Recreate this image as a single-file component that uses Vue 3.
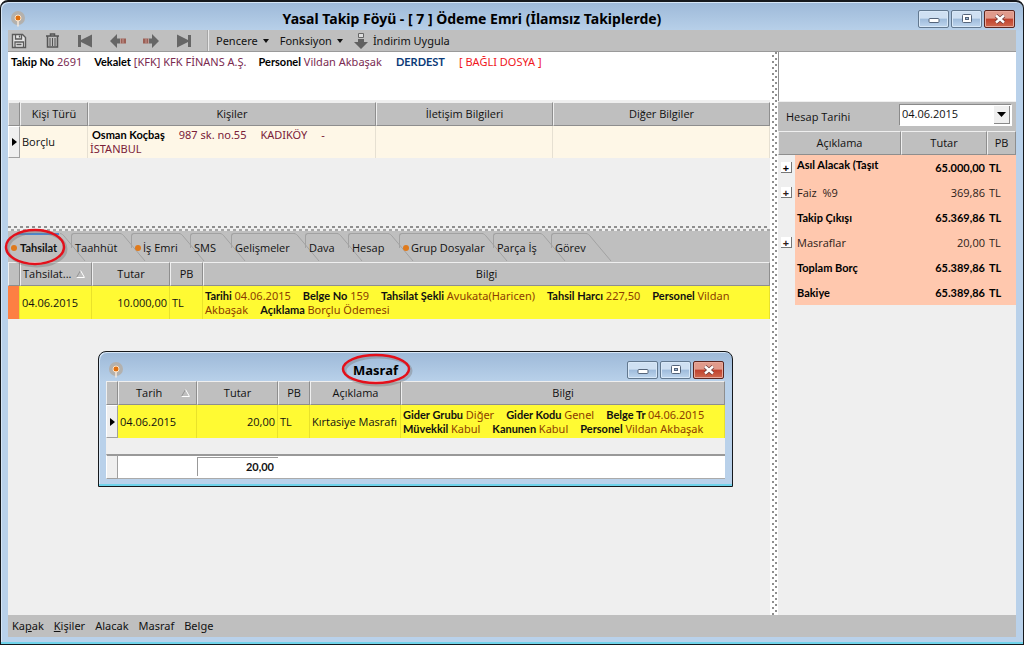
<script setup>
import { ref } from 'vue'

const date = ref('04.06.2015')
const activeTab = ref('Tahsilat')

const tabs = [
  { name: 'Tahsilat', dot: true, size: 'w1' },
  { name: 'Taahhüt', dot: false, size: 'w2' },
  { name: 'İş Emri', dot: true, size: 'w3' },
  { name: 'SMS', dot: false, size: 'w4' },
  { name: 'Gelişmeler', dot: false, size: 'w5' },
  { name: 'Dava', dot: false, size: 'w6' },
  { name: 'Hesap', dot: false, size: 'w7' },
  { name: 'Grup Dosyalar', dot: true, size: 'w8' },
  { name: 'Parça İş', dot: false, size: 'w9' },
  { name: 'Görev', dot: false, size: 'w10' },
]

const caseInfo = [
  ['Takip No', '2691'],
  ['Vekalet', '[KFK] KFK FİNANS A.Ş.'],
  ['Personel', 'Vildan Akbaşak'],
]

const paymentLines = [
  [['Tarihi', '04.06.2015'], ['Belge No', '159'], ['Tahsilat Şekli', 'Avukata(Haricen)'], ['Tahsil Harcı', '227,50'], ['Personel', 'Vildan']],
  [['', 'Akbaşak'], ['Açıklama', 'Borçlu Ödemesi']],
]

const expenseLines = [
  [['Gider Grubu', 'Diğer'], ['Gider Kodu', 'Genel'], ['Belge Tr', '04.06.2015']],
  [['Müvekkil', 'Kabul'], ['Kanunen', 'Kabul'], ['Personel', 'Vildan Akbaşak']],
]

const summary = [
  { label: 'Asıl Alacak (Taşıt', amount: '65.000,00', strong: true, expandable: true },
  { label: 'Faiz  %9', amount: '369,86', strong: false, expandable: true },
  { label: 'Takip Çıkışı', amount: '65.369,86', strong: true, expandable: false },
  { label: 'Masraflar', amount: '20,00', strong: false, expandable: true },
  { label: 'Toplam Borç', amount: '65.389,86', strong: true, expandable: false },
  { label: 'Bakiye', amount: '65.389,86', strong: true, expandable: false },
]
</script>

<template>
  <div class="window main-window">
    <header class="titlebar">
      <svg class="app-icon" width="16" height="16" viewBox="0 0 16 16">
        <circle cx="8" cy="7" r="7" fill="#b3b1ae" />
        <circle cx="8" cy="7" r="3" fill="#e0700f" stroke="#fbe3c8" />
        <path d="M8 9.500v6" stroke="#f7e9da" stroke-width="1.500" />
      </svg>
      <h1 class="title main-title">Yasal Takip Föyü - [ 7 ] Ödeme Emri (İlamsız Takiplerde)</h1>
      <div class="controls">
        <button class="ctl" aria-label="Simge durumuna küçült"><svg width="12" height="12" viewBox="0 0 12 12"><rect x="1" y="5.500" width="10" height="4" rx="1" fill="#fff" stroke="#54647a" /></svg></button>
        <button class="ctl" aria-label="Ekranı kapla"><svg width="12" height="12" viewBox="0 0 12 12"><rect x="1.500" y="1.500" width="9" height="8" rx="1" fill="#fff" stroke="#54647a" /><rect x="4.500" y="4.500" width="3" height="2" fill="#9fb8d6" stroke="#54647a" /></svg></button>
        <button class="ctl close" aria-label="Kapat"><svg width="12" height="12" viewBox="0 0 12 12"><path d="M2 2.500l8 7M10 2.500l-8 7" stroke="#6a3a3a" stroke-width="4" /><path d="M2 2.500l8 7M10 2.500l-8 7" stroke="#fff" stroke-width="2.400" /></svg></button>
      </div>
    </header>

    <div class="client">
      <nav class="toolbar">
        <div class="icons">
          <button aria-label="Kaydet"><svg width="17" height="16" viewBox="0 0 17 16"><path d="M1.500 1.500h10l3 3v10h-13z" fill="#e4e4e4" stroke="#5a5a5a" stroke-width="1.400" /><path d="M4.500 1.500v4.500h6v-4.500M8.500 2.500v2M4 14.500v-5.500h8.500v5.500M5.500 11.500h5" fill="none" stroke="#5a5a5a" stroke-width="1.300" /></svg></button>
          <button aria-label="Sil"><svg width="17" height="16" viewBox="0 0 17 16"><path d="M2 3h13M6.500 2.500v-1.500h4V2.500M3.500 3.500v10.500h10V3.500" fill="none" stroke="#555" stroke-width="1.500" /><path d="M6 5v8M8.500 5v8M11 5v8" stroke="#555" /></svg></button>
          <button aria-label="İlk"><svg width="17" height="16" viewBox="0 0 17 16"><path d="M1 2h3v5l11-5.500v13L4 9v5H1z" fill="#666" /></svg></button>
          <button aria-label="Önceki"><svg width="17" height="16" viewBox="0 0 17 16"><path d="M0 8l7-7V5.500h3v5H7V15z" fill="#666" /><path d="M10.500 5.500h5.500v5h-5.500z" fill="#9c5f55" /><path d="M10.500 5.500v5M13 5.500v5" stroke="#bd9a94" /></svg></button>
          <button aria-label="Sonraki"><svg width="17" height="16" viewBox="0 0 17 16"><path d="M16 8L9 1V5.500H6v5h3V15z" fill="#666" /><path d="M0 5.500h5.500v5H0z" fill="#9c5f55" /><path d="M3 5.500v5M5.500 5.500v5" stroke="#bd9a94" /></svg></button>
          <button aria-label="Son"><svg width="17" height="16" viewBox="0 0 17 16"><path d="M15 2h-3v5L1 1.500v13L12 9v5h3z" fill="#666" /></svg></button>
        </div>
        <div class="commands">
          <button>Pencere<i class="caret"></i></button>
          <button>Fonksiyon<i class="caret"></i></button>
          <button class="discount"><svg width="14" height="16" viewBox="0 0 14 16"><path d="M4.500 .5h5v4h-5z" fill="#ddd" stroke="#666" /><path d="M4 6h6v3h4l-7 7-7-7h4z" fill="#606060" /></svg>İndirim Uygula</button>
        </div>
      </nav>

      <main class="body">
        <section class="left">
          <div class="info">
            <span v-for="[k, v] in caseInfo" :key="k"><b>{{ k }}</b> {{ v }}</span>
            <b class="status">DERDEST</b>
            <span class="linked">[ BAĞLI DOSYA ]</span>
          </div>

          <div class="people">
            <table>
              <colgroup><col class="c12"><col class="c68"><col class="c288"><col class="c177"><col></colgroup>
              <thead><tr><th></th><th>Kişi Türü</th><th>Kişiler</th><th>İletişim Bilgileri</th><th>Diğer Bilgiler</th></tr></thead>
              <tbody>
                <tr class="cream">
                  <td class="marker"><i class="pointer"></i></td>
                  <td>Borçlu</td>
                  <td class="address">
                    <div class="line first"><b>Osman Koçbaş</b><span>987 sk. no.55</span><span>KADIKÖY</span><span>-</span></div>
                    <div class="line">İSTANBUL</div>
                  </td>
                  <td></td>
                  <td></td>
                </tr>
              </tbody>
            </table>
          </div>

          <div class="hsplit"></div>

          <div class="tabs" role="tablist">
            <button v-for="t in tabs" :key="t.name" role="tab" class="tab" :class="[t.size, { active: activeTab === t.name }]" :aria-selected="activeTab === t.name" @click="activeTab = t.name">
              <i v-if="t.dot" class="dot"></i>{{ t.name }}
              <svg class="slant" width="26" height="28" viewBox="0 0 26 28"><path d="M0 .5C2 .5 3 2 4 3L25 28" fill="none" stroke="#a2a2a2" /></svg>
            </button>
          </div>

          <div class="payments">
            <table>
              <colgroup><col class="c12"><col class="c72"><col class="c78"><col class="c33"><col></colgroup>
              <thead><tr><th></th><th class="sorted"><div>Tahsilat...<svg width="9" height="8" viewBox="0 0 9 8"><path d="M4.500 .5L.5 7.500h8" fill="none" stroke="#929292" /><path d="M4.500 .5l4 7h-8" fill="none" stroke="#fff" /></svg></div></th><th>Tutar</th><th>PB</th><th>Bilgi</th></tr></thead>
              <tbody>
                <tr class="yellow">
                  <td class="orange"></td>
                  <td>04.06.2015</td>
                  <td class="num">10.000,00</td>
                  <td>TL</td>
                  <td class="details">
                    <div v-for="(line, i) in paymentLines" :key="i" class="line"><span v-for="[k, v] in line" :key="k"><b v-if="k">{{ k }}&nbsp;</b>{{ v }}</span></div>
                  </td>
                </tr>
              </tbody>
            </table>
          </div>
        </section>

        <div class="vsplit"></div>

        <aside class="right">
          <div class="blank"></div>
          <div class="date-row">
            <label for="calc-date">Hesap Tarihi</label>
            <div class="combo">
              <select id="calc-date" v-model="date"><option>04.06.2015</option></select>
              <span class="drop"><svg width="9" height="5" viewBox="0 0 9 5"><path d="M0 0h9L4.500 5z" fill="#000" /></svg></span>
            </div>
          </div>
          <table class="summary">
            <colgroup><col class="c17"><col><col class="c86"><col class="c29"></colgroup>
            <thead><tr><th colspan="2">Açıklama</th><th>Tutar</th><th>PB</th></tr></thead>
            <tbody>
              <tr v-for="r in summary" :key="r.label" :class="{ strong: r.strong, group: r.strong && r.expandable }">
                <td class="expander"><button v-if="r.expandable" :aria-label="r.label">+</button></td>
                <td class="label">{{ r.label }}</td>
                <td class="num">{{ r.amount }}</td>
                <td>TL</td>
              </tr>
            </tbody>
          </table>
        </aside>
      </main>

      <footer class="bottom">
        <button>Ka<u>p</u>ak</button><button><u>K</u>işiler</button><button>Alacak</button><button>Masraf</button><button>Belge</button>
      </footer>
    </div>

    <svg class="ring ring-tab" width="66" height="42" viewBox="0 0 66 42"><ellipse cx="34" cy="22" rx="29" ry="17" fill="none" stroke="#777" stroke-opacity=".4" stroke-width="3" /><ellipse cx="32" cy="20" rx="29" ry="17" fill="none" stroke="#e3101b" stroke-width="2.500" /></svg>

    <div class="window dialog" role="dialog" aria-labelledby="dlg-title">
      <header class="titlebar">
        <svg class="app-icon" width="16" height="16" viewBox="0 0 16 16">
          <circle cx="8" cy="7" r="7" fill="#b3b1ae" />
          <circle cx="8" cy="7" r="3" fill="#e0700f" stroke="#fbe3c8" />
          <path d="M8 9.500v6" stroke="#f7e9da" stroke-width="1.500" />
        </svg>
        <h2 id="dlg-title" class="title">Masraf<svg class="ring ring-title" width="74" height="36" viewBox="0 0 74 36"><ellipse cx="38" cy="19" rx="33" ry="14" fill="none" stroke="#777" stroke-opacity=".4" stroke-width="3" /><ellipse cx="36" cy="17" rx="33" ry="14" fill="none" stroke="#e3101b" stroke-width="2.500" /></svg></h2>
        <div class="controls">
          <button class="ctl" aria-label="Simge durumuna küçült"><svg width="12" height="12" viewBox="0 0 12 12"><rect x="1" y="5.500" width="10" height="4" rx="1" fill="#fff" stroke="#54647a" /></svg></button>
          <button class="ctl" aria-label="Ekranı kapla"><svg width="12" height="12" viewBox="0 0 12 12"><rect x="1.500" y="1.500" width="9" height="8" rx="1" fill="#fff" stroke="#54647a" /><rect x="4.500" y="4.500" width="3" height="2" fill="#9fb8d6" stroke="#54647a" /></svg></button>
          <button class="ctl close" aria-label="Kapat"><svg width="12" height="12" viewBox="0 0 12 12"><path d="M2 2.500l8 7M10 2.500l-8 7" stroke="#6a3a3a" stroke-width="4" /><path d="M2 2.500l8 7M10 2.500l-8 7" stroke="#fff" stroke-width="2.400" /></svg></button>
        </div>
      </header>
      <table>
        <colgroup><col class="c12"><col class="c79"><col class="c81"><col class="c32"><col class="c91"><col></colgroup>
        <thead><tr><th></th><th class="sorted wide"><div>Tarih<svg width="9" height="8" viewBox="0 0 9 8"><path d="M4.500 .5L.5 7.500h8" fill="none" stroke="#929292" /><path d="M4.500 .5l4 7h-8" fill="none" stroke="#fff" /></svg></div></th><th>Tutar</th><th>PB</th><th>Açıklama</th><th>Bilgi</th></tr></thead>
        <tbody>
          <tr class="yellow">
            <td class="marker"><i class="pointer"></i></td>
            <td>04.06.2015</td>
            <td class="num">20,00</td>
            <td>TL</td>
            <td>Kırtasiye Masrafı</td>
            <td class="details">
              <div v-for="(line, i) in expenseLines" :key="i" class="line"><span v-for="[k, v] in line" :key="k"><b>{{ k }}&nbsp;</b>{{ v }}</span></div>
            </td>
          </tr>
          <tr class="spacer"><td colspan="6"></td></tr>
        </tbody>
        <tfoot><tr><td class="marker"></td><td></td><td class="total"><b>20,00</b></td><td></td><td></td><td></td></tr></tfoot>
      </table>
    </div>
  </div>
</template>

<style>
body { margin: 0; background: #fff; }
</style>

<style scoped>
* { box-sizing: border-box; }
button, select { font: inherit; color: inherit; margin: 0; padding: 0; border: 0; background: none; }
b, .strong td { font-family: Lato, "Open Sans", sans-serif; font-weight: 700; }

.window {
  display: flex;
  flex-direction: column;
  border: 1px solid #15181c;
  border-radius: 8px 8px 0 0;
  background: linear-gradient(#9db9d8, #b9d1ea 30px, #b9d1ea);
  box-shadow: inset 0 -2px 0 #6fd3ea, inset 1px 1px 0 #d6e6f6;
  font: 11px/14px "Open Sans", "Noto Sans", sans-serif;
  color: #111;
}
.main-window { position: relative; height: 100vh; min-height: 560px; padding: 0 7px 7px; border-width: 2px 1px 1px; }
.titlebar { display: flex; align-items: center; flex: none; height: 28px; padding-top: 5px; }
.app-icon { margin-left: 2px; }
.title { position: relative; flex: 1; margin: 0; text-align: center; font: 700 13px/16px "Noto Sans", "Open Sans", sans-serif; color: #000; }
.main-title { font-size: 14px; }
.controls { display: flex; gap: 2px; padding-right: 1px; }
.ctl { display: grid; place-items: center; width: 31px; height: 18px; border: 1px solid #62788f; border-radius: 2px; background: linear-gradient(#cfe0f2 45%, #9ebbdb 50%, #bfd6ee); box-shadow: inset 0 0 0 1px #d8e8f8; }
.ctl.close { background: linear-gradient(#e09a8b 45%, #c0402c 50%, #cf6a50); border-color: #5b2620; box-shadow: inset 0 0 0 1px #e8a99c; }

.client { display: flex; flex-direction: column; flex: 1; min-height: 0; background: #efefef; }
.toolbar, .bottom, .info, .details, .address { font-family: "Noto Sans", "Open Sans", sans-serif; }
.toolbar { display: flex; flex: none; height: 22px; background: #bfbfbf; border-bottom: 1px solid #9a9a9a; }
.icons { display: flex; align-items: center; gap: 16px; padding: 0 14px 0 3px; border-right: 1px solid #a6a6a6; }
.icons button, .icons svg { display: block; width: 17px; height: 16px; }
.commands { display: flex; gap: 11px; padding-left: 7px; border-left: 1px solid #e8e8e8; }
.commands button { display: flex; align-items: center; gap: 5px; }
.caret { border: 3px solid transparent; border-top: 4px solid #111; border-bottom: 0; }
.body { display: flex; flex: 1; min-height: 0; }
.left { flex: 1; min-width: 0; display: flex; flex-direction: column; }

.info { display: flex; gap: 12px; flex: none; height: 48px; padding: 3px 3px 0; background: #fff; color: #7a2a50; white-space: nowrap; }
.info b { color: #000; }
.info .status { color: #0b3a78; padding: 0 2px; }
.info .linked { color: #f01522; }

table { width: 100%; border-collapse: separate; border-spacing: 0; table-layout: fixed; }
th, td { padding: 0; white-space: nowrap; }
th { height: 24px; font-weight: 400; background: #bfbfbf; border: 1px solid; border-color: #efefef #8e8e8e #8e8e8e #efefef; }
td { padding: 0 2px; }
.num { text-align: right; }
.c12 { width: 12px; } .c17 { width: 17px; } .c29 { width: 29px; } .c32 { width: 32px; } .c33 { width: 33px; }
.c68 { width: 68px; } .c72 { width: 72px; } .c78 { width: 78px; } .c79 { width: 79px; } .c81 { width: 81px; }
.c86 { width: 86px; } .c91 { width: 91px; } .c177 { width: 177px; } .c288 { width: 288px; }

.people { height: 125px; padding-top: 2px; flex: none; }
.cream td { height: 32px; background: #fef7e7; border-right: 1px solid #e6e0d2; }
.yellow td { height: 33px; background: #fffa33; border-right: 1px solid #e9e22a; }
.cream .marker, .yellow .marker, tfoot .marker { background: #efefef; border: 1px solid; border-color: #fff #a0a0a0 #a0a0a0 #fff; }
.yellow .orange { background: #fd7f43; }
.pointer { display: block; width: 0; margin-left: 1px; border: 4px solid transparent; border-left: 5px solid #000; border-right: 0; }
.line { display: flex; gap: 12px; }
.address { color: #7a2038; }
.address b { color: #000; }
.address .line { gap: 14px; }
.address .first { padding-left: 2px; }
.details { color: #8c3d00; }
.details b { color: #111; }

.hsplit {
  flex: none;
  height: 6px;
  background:
    repeating-linear-gradient(90deg, #8e8e8e 0 3px, transparent 3px 6px) 0 1px / 6px 2px repeat-x,
    repeating-linear-gradient(90deg, #a6a6a6 0 3px, transparent 3px 6px) 3px 4px / 6px 2px repeat-x,
    #f0f0f0;
}
.vsplit {
  flex: none;
  width: 8px;
  background:
    repeating-linear-gradient(#8e8e8e 0 2px, transparent 2px 6px) 2px 3px / 2px 6px repeat-y,
    repeating-linear-gradient(#8e8e8e 0 2px, transparent 2px 6px) 5px 0 / 2px 6px repeat-y,
    #fff;
}

.tabs { display: flex; flex: none; height: 31px; padding-top: 2px; background: #bfbfbf; overflow: hidden; }
.tab { position: relative; display: flex; align-items: center; flex: none; gap: 2px; padding: 0 0 0 4px; white-space: nowrap; }
.tab::before { content: ""; position: absolute; left: 0; top: 0; right: 10px; height: 14px; border: 1px solid #a2a2a2; border-right: 0; border-bottom: 0; border-top-left-radius: 3px; }
.slant { position: absolute; left: calc(100% - 11px); top: 0; pointer-events: none; }
.tab.active { font-family: Lato, "Open Sans", sans-serif; font-weight: 700; padding-left: 3px; gap: 3px; }
.tab.active::before { border: 0; border-top: 2px solid #4b87d0; right: 12px; left: 8px; }
.dot { width: 6px; height: 6px; border-radius: 50%; background: #e07a1c; }
.w1 { width: 63px; } .w2 { width: 60px; } .w3 { width: 59px; } .w4 { width: 41px; } .w5 { width: 74px; }
.w6 { width: 43px; } .w7 { width: 51px; } .w8 { width: 94px; } .w9 { width: 58px; } .w10 { width: 46px; }
.sorted div { display: flex; align-items: center; justify-content: space-between; padding: 0 6px 0 2px; }
.sorted.wide div { padding-left: 17px; }

.right { flex: none; width: 238px; }
.blank { height: 49px; background: #fff; border-left: 1px solid #909090; }
.date-row { display: flex; align-items: center; justify-content: space-between; height: 30px; padding: 0 4px 0 8px; background: #bfbfbf; border-top: 1px solid #efefef; }
.combo { position: relative; width: 113px; height: 22px; margin-bottom: 4px; }
.combo select { width: 100%; height: 100%; padding: 0 2px 2px; appearance: none; background: #fff; border: 1px solid; border-color: #8a8a8a #fff #fff #8a8a8a; border-radius: 0; }
.drop { position: absolute; right: 2px; top: 2px; bottom: 2px; width: 16px; display: grid; place-items: center; background: #efefef; border-right: 1px solid #888; border-bottom: 1px solid #888; pointer-events: none; }
.summary td { height: 25px; background: #ffc8ae; white-space: pre; color: #2c1c18; }
.summary .strong td { color: #000; }
.summary .group .label { vertical-align: top; padding-top: 3px; }
.summary .expander { background: #efefef; }
.expander button { display: block; width: 11px; height: 11px; margin-left: 1px; background: #fff; border-right: 1px solid #777; border-bottom: 1px solid #777; font: 700 11px/9px "Open Sans", sans-serif; }

.bottom { display: flex; align-items: center; gap: 10px; flex: none; height: 22px; padding-left: 4px; background: #bfbfbf; }

.ring { position: absolute; pointer-events: none; }
.ring-tab { left: 2px; top: 225px; }
.ring-title { left: 50%; top: -10px; margin-left: -36px; }

.dialog { position: absolute; left: 97px; top: 349px; width: 635px; padding: 0 7px 7px; }
.dialog .titlebar { height: 29px; padding-top: 7px; }
.spacer td { height: 16px; background: #efefef; }
tfoot td { height: 25px; background: #fff; border-top: 2px solid #999; border-bottom: 1px solid #aaa; }
tfoot .marker { border-top: 2px solid #999; }
.total { position: relative; text-align: right; padding-right: 4px; }
.total::before { content: ""; position: absolute; inset: 1px 0 2px; border-left: 1px solid #999; border-top: 1px solid #999; }
</style>
